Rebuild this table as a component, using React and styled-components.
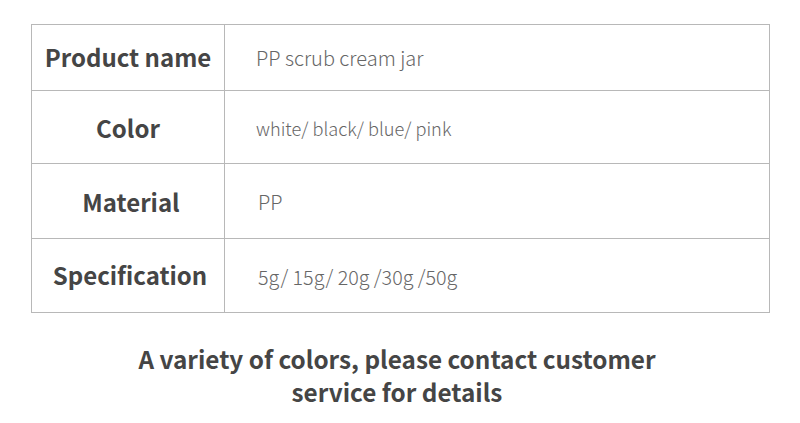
import React from "react";
import styled, { createGlobalStyle } from "styled-components";

const Global = createGlobalStyle`
  html, body { margin: 0; padding: 0; background: #fff; }
  body { font-family: "Noto Sans CJK SC", "Noto Sans", sans-serif; }
`;

const Page = styled.div`
  width: 800px;
  height: 423px;
  padding: 24px 0 0 31px;
  box-sizing: border-box;
`;

const Table = styled.div`
  width: 739px;
  display: grid;
  grid-template-columns: 193px 1fr;
  border-top: 1px solid #b8b8b8;
  border-left: 1px solid #b8b8b8;
  box-sizing: border-box;
`;

const Label = styled.div`
  height: ${(p) => p.$h}px;
  box-sizing: border-box;
  border-right: 1px solid #b8b8b8;
  border-bottom: 1px solid #b8b8b8;
  display: flex;
  align-items: center;
  justify-content: center;
  padding-left: ${(p) => p.$shift || 0}px;
  padding-top: ${(p) => p.$dy || 0}px;
  padding-bottom: ${(p) => p.$up || 0}px;
  font-size: 24px;
  font-weight: 700;
  color: #454545;
  line-height: 1;
`;

const Value = styled.div`
  height: ${(p) => p.$h}px;
  box-sizing: border-box;
  border-right: 1px solid #b8b8b8;
  border-bottom: 1px solid #b8b8b8;
  display: flex;
  align-items: center;
  padding-left: ${(p) => p.$pad}px;
  padding-top: ${(p) => p.$dy || 0}px;
  font-size: ${(p) => p.$size}px;
  font-weight: 300;
  color: #666;
  line-height: 1;
`;

const Caption = styled.p`
  margin: 29px 0 0 -31px;
  width: 800px;
  padding-right: 6px;
  box-sizing: border-box;
  text-align: center;
  font-size: 24.3px;
  font-weight: 700;
  color: #454545;
  line-height: 33px;
`;

const rows = [
  { label: "Product name", value: "PP scrub cream jar", h: 66, pad: 31, dy: 0, ldy: 0, up: 2, size: 20 },
  { label: "Color", value: "white/ black/ blue/ pink", h: 73, pad: 31, dy: 2, ldy: 2, size: 18.2 },
  { label: "Material", value: "PP", h: 75, pad: 33, dy: 2, ldy: 2, shift: 6, size: 20 },
  { label: "Specification", value: "5g/ 15g/ 20g /30g /50g", h: 74, pad: 33, dy: 2, ldy: 0, up: 2, shift: 4, size: 19.7 },
];

export default function App() {
  return (
    <>
      <Global />
      <Page>
        <Table>
          {rows.map((r) => (
            <React.Fragment key={r.label}>
              <Label $h={r.h} $shift={r.shift} $dy={r.ldy} $up={r.up}>{r.label}</Label>
              <Value $h={r.h} $pad={r.pad} $dy={r.dy} $size={r.size}>{r.value}</Value>
            </React.Fragment>
          ))}
        </Table>
        <Caption>
          A variety of colors, please contact customer
          <br />
          service for details
        </Caption>
      </Page>
    </>
  );
}
